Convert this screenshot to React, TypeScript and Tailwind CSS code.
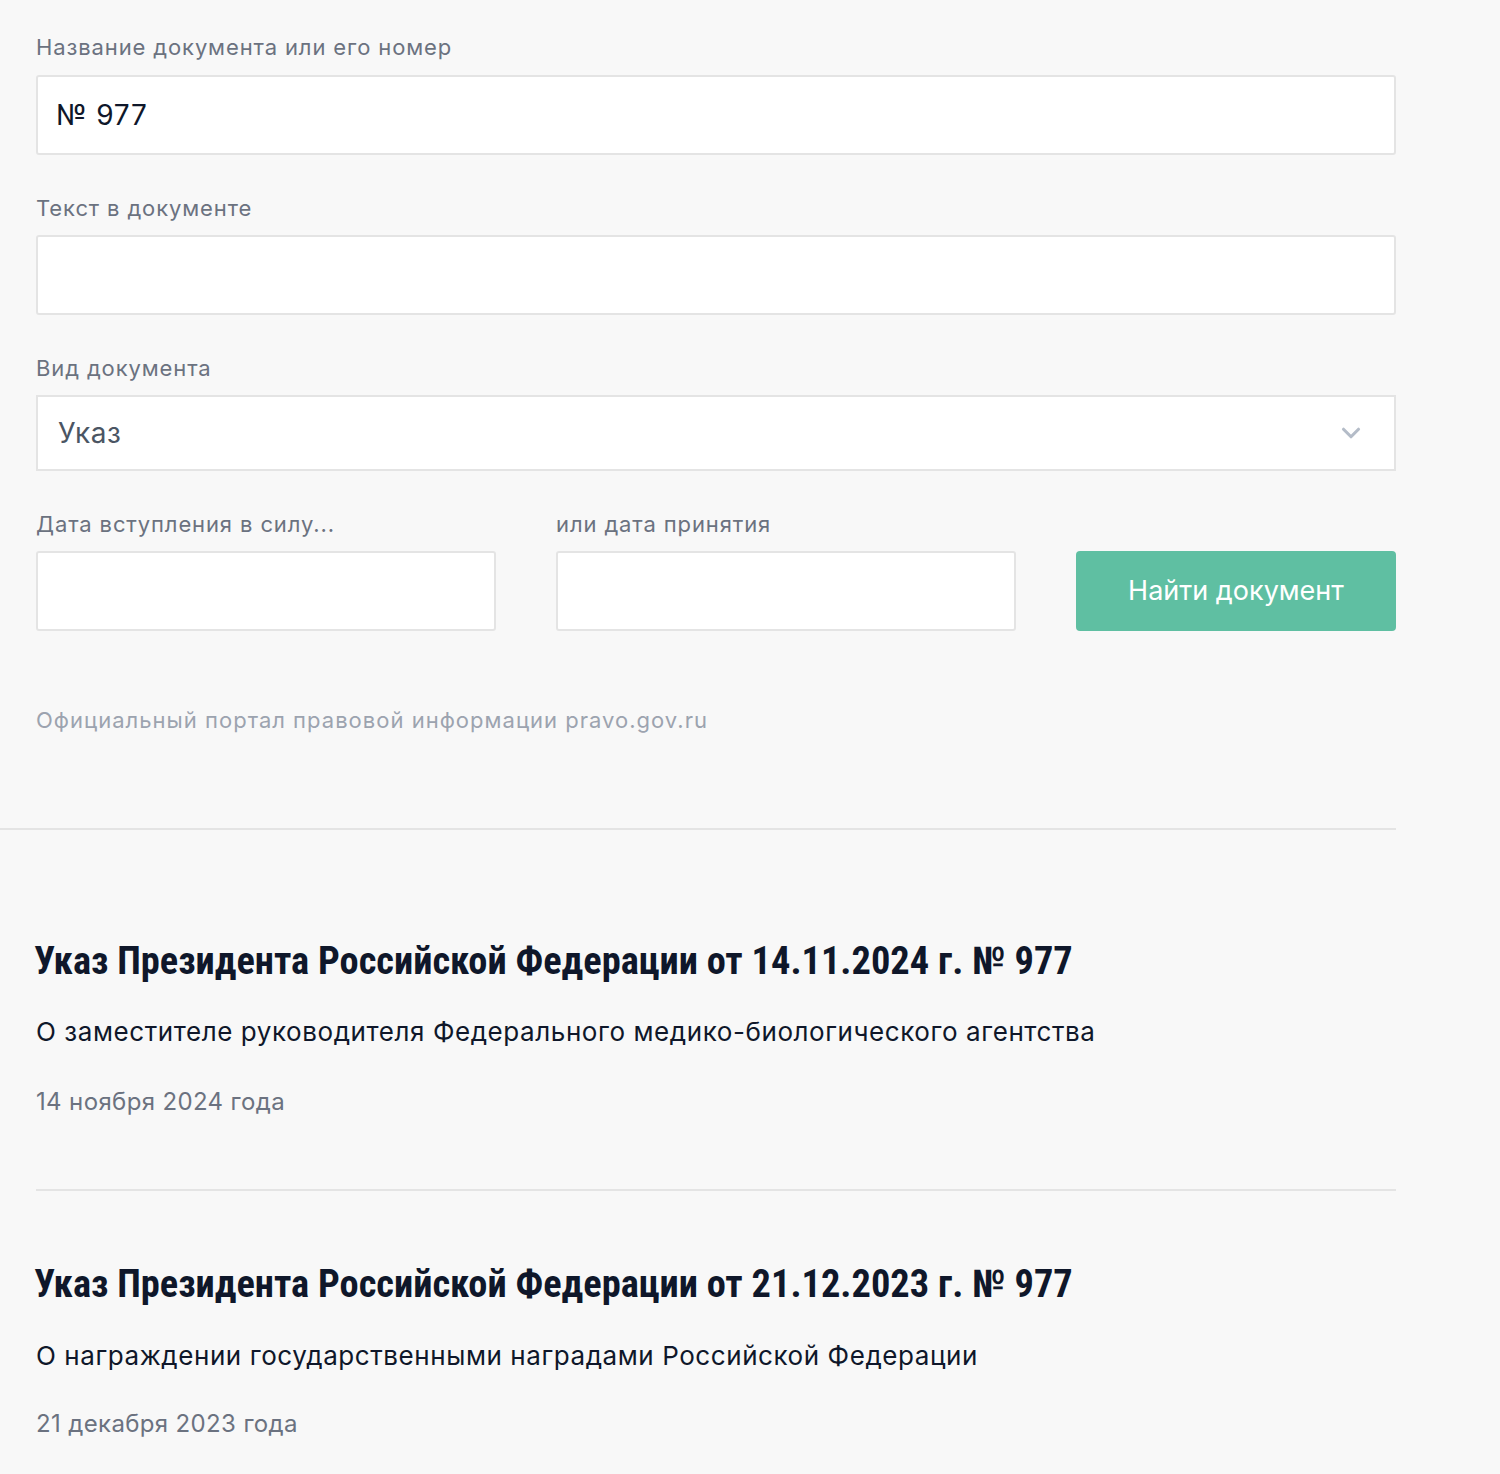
import { ChevronDown } from "lucide-react";

const body = "font-['Inter','Roboto','Liberation_Sans',sans-serif]";
const heading = "font-['Roboto_Condensed','Liberation_Sans_Narrow','DejaVu_Sans_Condensed',sans-serif]";

const results = [
  {
    title: "Указ Президента Российской Федерации от 14.11.2024 г. № 977",
    desc: "О заместителе руководителя Федерального медико-биологического агентства",
    date: "14 ноября 2024 года",
  },
  {
    title: "Указ Президента Российской Федерации от 21.12.2023 г. № 977",
    desc: "О награждении государственными наградами Российской Федерации",
    date: "21 декабря 2023 года",
  },
];

function Label({ children }: { children: React.ReactNode }) {
  return <div className="text-[22px] leading-[26px] tracking-[0.04em] text-[#6b7280]">{children}</div>;
}

export default function App() {
  return (
    <div className={`min-h-[1474px] bg-[#f8f8f8] ${body}`}>
      <div className="pl-[36px] pt-[34px] w-[1396px]">
        <Label>Название документа или его номер</Label>
        <div className="mt-[15px] h-[80px] border-2 border-[#e4e4e4] rounded-[3px] bg-white flex items-center px-[18px] text-[28px] tracking-[0.03em] text-[#0f172a]">
          № 977
        </div>

        <div className="mt-[40px]">
          <Label>Текст в документе</Label>
        </div>
        <div className="mt-[14px] h-[80px] border-2 border-[#e4e4e4] rounded-[3px] bg-white" />

        <div className="mt-[40px]">
          <Label>Вид документа</Label>
        </div>
        <div className="mt-[14px] h-[76px] border-2 border-[#e4e4e4] bg-white flex items-center justify-between pl-[20px] pr-[28px] text-[28px] tracking-[0.02em] text-[#4b5563]">
          <span>Указ</span>
          <ChevronDown className="w-[30px] h-[30px] text-[#b4bcc8]" strokeWidth={2.5} />
        </div>

        <div className="mt-[40px] flex gap-[60px]">
          <div className="w-[460px]">
            <Label>Дата вступления в силу...</Label>
            <div className="mt-[14px] h-[80px] border-2 border-[#e4e4e4] rounded-[3px] bg-white" />
          </div>
          <div className="w-[460px]">
            <Label>или дата принятия</Label>
            <div className="mt-[14px] h-[80px] border-2 border-[#e4e4e4] rounded-[3px] bg-white" />
          </div>
          <div className="w-[320px] flex flex-col justify-end">
            <button className="h-[80px] rounded-[4px] bg-[#5fbfa2] text-white text-[27px]">Найти документ</button>
          </div>
        </div>

        <div className="mt-[76px] text-[22px] leading-[26px] tracking-[0.046em] text-[#9ca3af]">
          Официальный портал правовой информации pravo.gov.ru
        </div>
      </div>

      <div className="mt-[95px] w-[1396px] h-[2px] bg-[#e4e4e4]" />

      <div className="pl-[36px] w-[1396px]">
        {results.map((r, i) => (
          <div key={i} className={i > 0 ? "border-t-2 border-[#e4e4e4]" : ""}>
            <div className={i > 0 ? "pt-[70px] pb-[72px]" : "pt-[108px] pb-[73px]"}>
              <div className={`${heading} font-bold text-[38.4px] leading-[46px] text-[#0f172a] -ml-[2px]`}>{r.title}</div>
              <div className={`${i > 0 ? "mt-[33px]" : "mt-[32px]"} text-[26px] leading-[32px] tracking-[0.022em] text-[#0f172a]`}>{r.desc}</div>
              <div className={`${i > 0 ? "mt-[38px]" : "mt-[40px]"} text-[24px] leading-[28px] tracking-[0.015em] text-[#6b7280]`}>{r.date}</div>
            </div>
          </div>
        ))}
      </div>
    </div>
  );
}
